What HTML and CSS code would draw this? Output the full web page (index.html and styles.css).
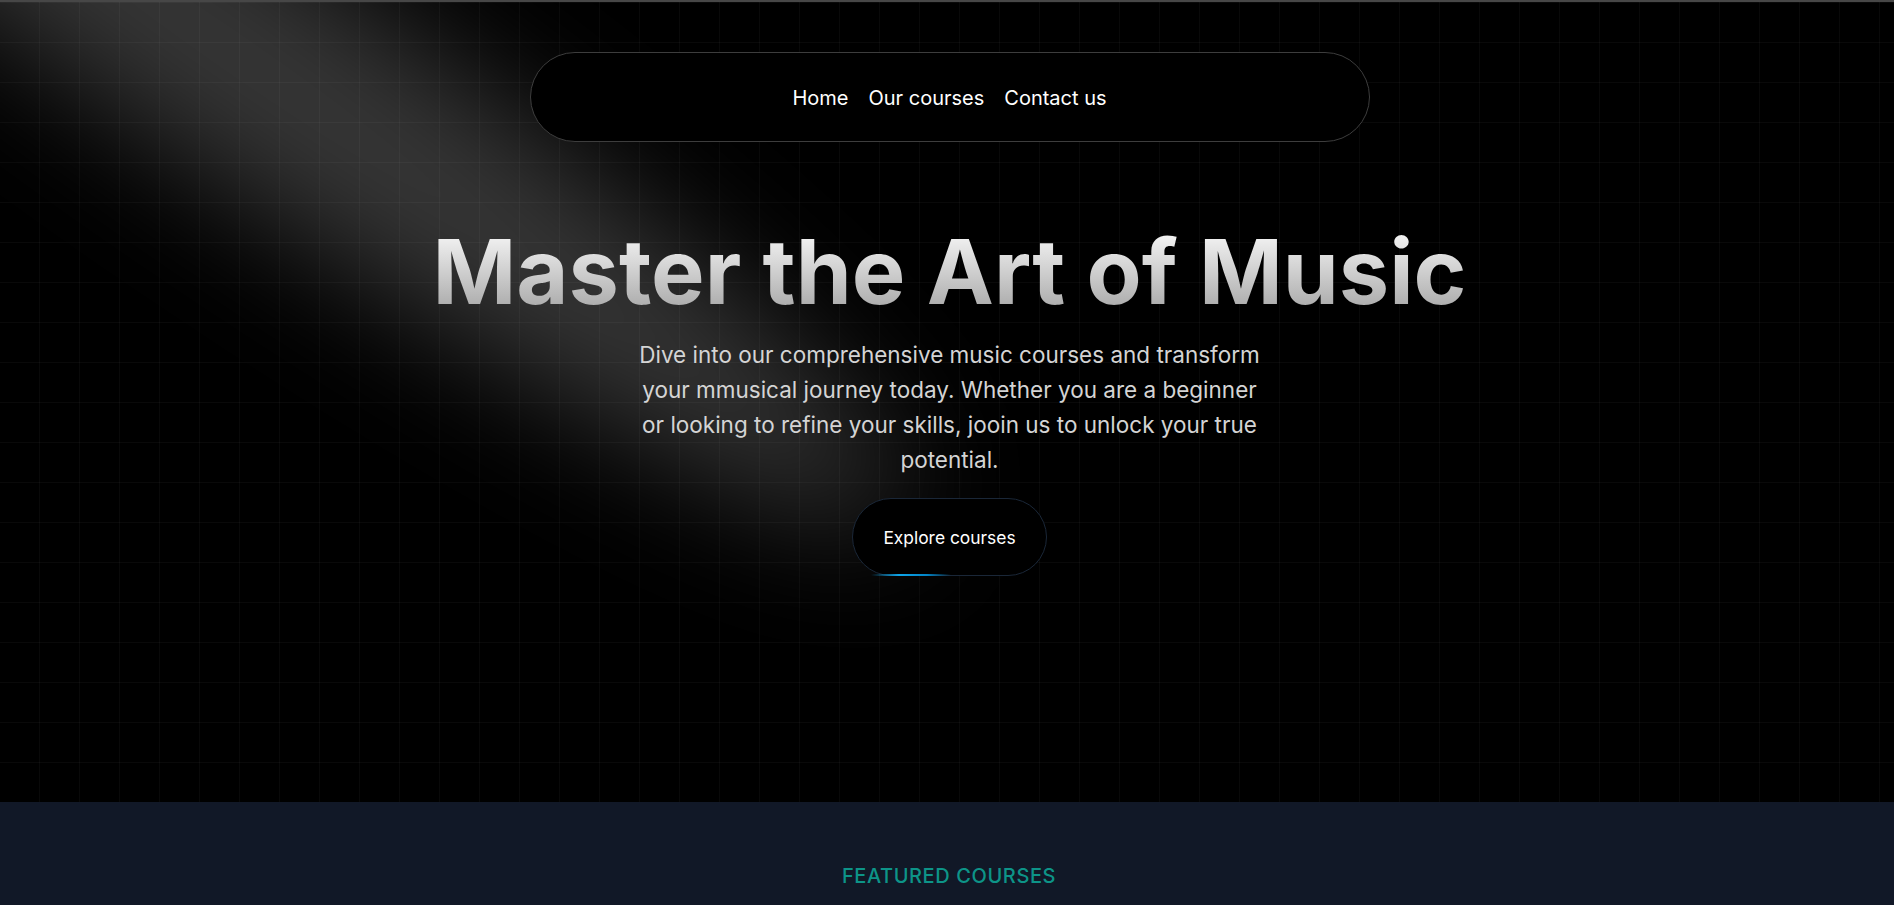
FILE: index.html
```html
<!DOCTYPE html>
<html lang="en">
<head>
<meta charset="utf-8">
<title>Music School</title>
<link rel="stylesheet" href="styles.css">
</head>
<body>
<div class="topline"></div>
<section class="hero">
  <svg class="spotlight" viewBox="0 0 3787 2842" fill="none" xmlns="http://www.w3.org/2000/svg">
    <g filter="url(#spotblur)">
      <ellipse cx="1924.71" cy="273.501" rx="1924.71" ry="273.501" transform="matrix(-0.822377 -0.568943 -0.568943 0.822377 3631.88 2291.09)" fill="white" fill-opacity="0.21"></ellipse>
    </g>
    <defs>
      <filter id="spotblur" x="0.860352" y="0.838989" width="3785.16" height="2840.26" filterUnits="userSpaceOnUse" color-interpolation-filters="sRGB">
        <feFlood flood-opacity="0" result="BackgroundImageFix"></feFlood>
        <feBlend mode="normal" in="SourceGraphic" in2="BackgroundImageFix" result="shape"></feBlend>
        <feGaussianBlur stdDeviation="151" result="blur"></feGaussianBlur>
      </filter>
    </defs>
  </svg>
  <div class="hero-inner">
    <nav class="nav">
      <a class="nav-link" href="#">Home</a>
      <a class="nav-link" href="#">Our courses</a>
      <a class="nav-link" href="#">Contact us</a>
    </nav>
    <h1 class="title">Master the Art of Music</h1>
    <p class="lead">Dive into our comprehensive music courses and transform your mmusical journey today. Whether you are a beginner or looking to refine your skills, jooin us to unlock your true potential.</p>
    <a class="cta" href="#"><span class="cta-glow"></span><span class="cta-label">Explore courses</span></a>
  </div>
</section>
<section class="featured">
  <h2 class="eyebrow">Featured Courses</h2>
</section>
</body>
</html>
```
FILE: styles.css
```css
* { box-sizing: border-box; }
html, body { margin: 0; padding: 0; }
body {
  background: #000;
  font-family: Inter, "Noto Sans", sans-serif;
  color: #fff;
  overflow: hidden;
}
.topline { height: 2px; background: #474747; }
.hero {
  position: relative;
  height: 800px;
  overflow: hidden;
  background-color: #000;
  background-image:
    linear-gradient(to right, rgba(255,255,255,0.035) 1px, transparent 1px),
    linear-gradient(to bottom, rgba(255,255,255,0.035) 1px, transparent 1px);
  background-size: 40px 40px;
  background-position: -1px 0;
}
.spotlight {
  position: absolute;
  top: -80px;
  left: 240px;
  width: 84%;
  height: 169%;
  transform: translate(-50%, -40%);
  pointer-events: none;
  z-index: 0;
}
.hero-inner {
  position: relative;
  z-index: 1;
  display: flex;
  flex-direction: column;
  align-items: center;
  padding-top: 50px;
  padding-left: 5px;
}
.nav {
  width: 840px;
  height: 90px;
  border: 1px solid #3d3d3d;
  border-radius: 9999px;
  background: #000;
  display: flex;
  align-items: center;
  justify-content: center;
  gap: 20px;
  padding-top: 1px;
}
.nav-link {
  color: #fff;
  text-decoration: none;
  font-size: 20px;
  font-weight: 400;
}
.title {
  margin: 85px 0 0;
  font-size: 90px;
  line-height: 1;
  font-weight: 700;
  letter-spacing: 0;
  background: linear-gradient(to bottom, #fafafa, #a3a3a3);
  -webkit-background-clip: text;
  background-clip: text;
  color: transparent;
}
.lead {
  margin: 20px 0 0;
  max-width: 640px;
  text-align: center;
  font-size: 22.5px;
  line-height: 35px;
  color: #d4d4d4;
}
.cta {
  position: relative;
  margin-top: 21px;
  width: 195px;
  height: 78px;
  display: flex;
  align-items: center;
  justify-content: center;
  border: 1px solid #1a2738;
  border-radius: 9999px;
  background: #000;
  color: #fff;
  text-decoration: none;
  font-size: 17.4px;
}
.cta-glow {
  position: absolute;
  left: 18px;
  bottom: -1px;
  width: 80px;
  height: 2px;
  background: linear-gradient(to right, transparent, #0ea5e9 35%, #0284c7 70%, transparent);
}
.featured {
  background: #111827;
  height: 103px;
  padding-top: 60px;
  padding-left: 4px;
  text-align: center;
}
.eyebrow {
  margin: 0;
  font-size: 20px;
  line-height: 28px;
  font-weight: 500;
  letter-spacing: 0.03em;
  text-transform: uppercase;
  color: #0d9488;
}
```
